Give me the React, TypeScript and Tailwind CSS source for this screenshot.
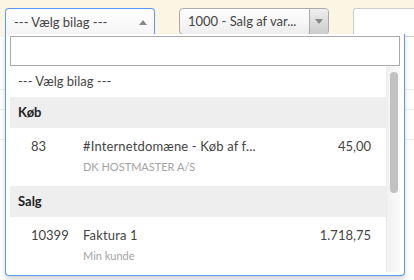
import React from "react";

type Item = { nr: string; title: string; sub: string; amount: string };

const groups: { label: string; items: Item[] }[] = [
  {
    label: "Køb",
    items: [{ nr: "83", title: "#Internetdomæne - Køb af f...", sub: "DK HOSTMASTER A/S", amount: "45,00" }],
  },
  {
    label: "Salg",
    items: [{ nr: "10399", title: "Faktura 1", sub: "Min kunde", amount: "1.718,75" }],
  },
];

const ResultRow: React.FC<{ item: Item }> = ({ item }) => (
  <div className="flex h-[58px] pt-[7px] pl-[21px] pr-[15px]">
    <div className="w-[52px] leading-[22px]">{item.nr}</div>
    <div className="flex-1 min-w-0">
      <div className="leading-[22px] tracking-[0.15px]">{item.title}</div>
      <div className="text-[11px] text-[#a3a3a3] leading-[18px] mt-[1px]">{item.sub}</div>
    </div>
    <div className="leading-[22px] text-right">{item.amount}</div>
  </div>
);

export default function App() {
  return (
    <div
      className="relative w-[414px] h-[280px] overflow-hidden bg-[#fcf5e3] text-[13px] text-[#444]"
      style={{ fontFamily: "Lato, 'Open Sans', sans-serif" }}
    >
      {/* Top bar */}
      <div className="flex items-start pt-2 pl-[5px] h-[37px]">
        <div className="w-[150px] h-[28px] flex items-center pl-2 pr-[7px] border border-[#5897fb] border-b-0 rounded-t-[4px] bg-gradient-to-t from-[#f4f4f4] to-white">
          <span className="flex-1">--- Vælg bilag ---</span>
          <span className="w-0 h-0 border-x-[4px] border-x-transparent border-b-[5px] border-b-[#888]" />
        </div>
        <div className="ml-[24px] w-[150px] h-[27px] flex items-stretch border border-[#aaa] rounded-[4px] bg-gradient-to-t from-[#eee] to-white overflow-hidden">
          <span className="flex-1 flex items-center pl-2">1000 - Salg af var...</span>
          <span className="w-[19px] flex items-center justify-center border-l border-[#aaa] bg-gradient-to-b from-[#eee] to-[#ccc]">
            <span className="w-0 h-0 border-x-[4px] border-x-transparent border-t-[5px] border-t-[#888]" />
          </span>
        </div>
        <div className="ml-[24px] flex-1 h-[29px] bg-white border border-[#ccc] border-r-0 rounded-l-[3px]" />
      </div>

      {/* Page content behind the dropdown */}
      <div className="bg-white h-[243px]">
        <div className="h-[53px] border-b border-[#eee]" />
        <div className="h-[20px] border-b border-[#eee]" />
        <div className="h-[30px] border-b border-[#eee]" />
      </div>

      {/* Dropdown */}
      <div className="absolute left-[5px] top-[34px] w-[400px] h-[242px] bg-white border border-[#5897fb] border-t-0 rounded-b-[4px] shadow-[0_4px_5px_rgba(0,0,0,0.15)] flex flex-col pt-[2px] px-1">
        <div className="h-[30px] border border-[#aaa] bg-white" />
        <div className="flex flex-1 min-h-0">
          <div className="flex-1 min-w-0 overflow-hidden">
            <div className="h-[31px] flex items-center pl-[8px]">--- Vælg bilag ---</div>
            {groups.map((g) => (
              <div key={g.label}>
                <div className="h-[31px] flex items-center pl-[8px] bg-[#eee] font-bold text-[#222]">{g.label}</div>
                {g.items.map((it) => (
                  <ResultRow key={it.nr} item={it} />
                ))}
              </div>
            ))}
          </div>
          <div className="w-[14px] mb-[3px] bg-gradient-to-r from-[#f1f1f1] to-[#fafafa] border-l border-[#ececec] pt-[6px] flex justify-center">
            <div className="w-[8px] h-[121px] rounded-full bg-[#c1c1c1]" />
          </div>
        </div>
      </div>
    </div>
  );
}
